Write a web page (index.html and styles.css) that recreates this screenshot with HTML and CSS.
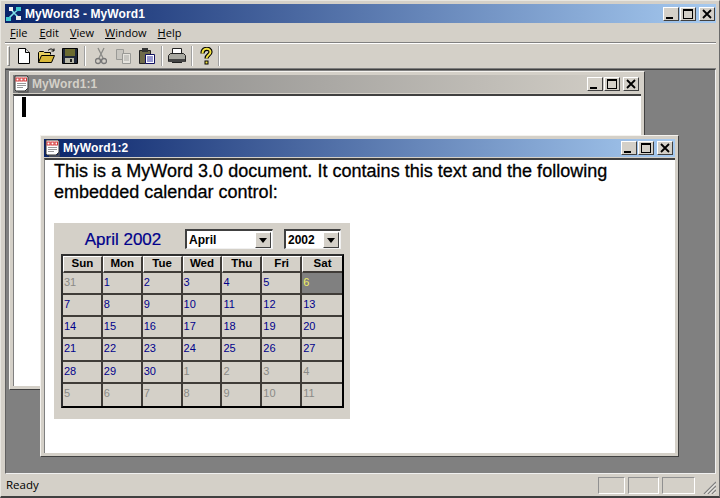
FILE: index.html
```html
<!DOCTYPE html>
<html lang="en">
<head>
<meta charset="utf-8">
<title>MyWord3 - MyWord1</title>
<link rel="stylesheet" href="styles.css">
</head>
<body>
<svg class="defs" width="0" height="0" aria-hidden="true">
  <symbol id="i-min" viewBox="0 0 16 14"><rect x="3" y="10" width="7" height="2" fill="#000"/></symbol>
  <symbol id="i-max" viewBox="0 0 16 14"><path d="M3 2h10v10H3z M4 4v7h8V4z" fill="#000" fill-rule="evenodd"/></symbol>
  <symbol id="i-close" viewBox="0 0 16 14"><path d="M4 3l8 8M12 3l-8 8" stroke="#000" stroke-width="1.8" fill="none"/></symbol>
  <symbol id="i-doc" viewBox="0 0 18 18">
    <path d="M2 1h12l1 1v11l-3 3H3l-1-1z" fill="#fff" stroke="#333" stroke-width="1"/>
    <path d="M15 13v4H5" stroke="#555" stroke-width="1.4" fill="none"/>
    <rect x="3" y="3" width="3" height="3" fill="none" stroke="#d02020" stroke-width=".9"/><rect x="7" y="3" width="3" height="3" fill="none" stroke="#d02020" stroke-width=".9"/><rect x="11" y="3" width="2.500" height="3" fill="none" stroke="#d02020" stroke-width=".9"/>
    <path d="M4 8.500h9M4 10.500h9M4 12.500h6" stroke="#999" stroke-width="1"/>
  </symbol>
  <symbol id="i-dd" viewBox="0 0 16 14"><path d="M4 5h8l-4 5z" fill="#000"/></symbol>
</svg>

<div class="app">
  <header class="titlebar app-title">
    <svg class="app-icon" width="18" height="16" viewBox="0 0 18 16"><rect width="18" height="16" fill="#0a246a"/><path d="M3 13L9 7l5-4M9 7l5 5M9 7L6 3" stroke="#7fe0e8" stroke-width="1.6" fill="none"/><rect x="1" y="11" width="5" height="4" fill="#40c8d0"/><rect x="11" y="10" width="5" height="4" fill="#e8e8e8"/><rect x="11" y="1" width="5" height="4" fill="#40c8d0"/><rect x="4" y="1" width="4" height="4" fill="#f0f0f0"/></svg>
    <span class="title-text">MyWord3 - MyWord1</span>
    <span class="caption-btns">
      <span class="cap"><svg><use href="#i-min"/></svg></span><span class="cap"><svg><use href="#i-max"/></svg></span><span class="cap cap-close"><svg><use href="#i-close"/></svg></span>
    </span>
  </header>

  <nav class="menubar">
    <span class="menu"><u>F</u>ile</span>
    <span class="menu"><u>E</u>dit</span>
    <span class="menu"><u>V</u>iew</span>
    <span class="menu"><u>W</u>indow</span>
    <span class="menu"><u>H</u>elp</span>
  </nav>

  <div class="toolbar">
    <span class="grip"></span>
    <span class="tool"><svg width="14" height="16" viewBox="0 0 14 16"><path d="M1.500 .5h7l4 4v11h-11z" fill="#fff" stroke="#000"/><path d="M8.500 .5v4h4" fill="#ddd" stroke="#000"/></svg></span>
    <span class="tool"><svg width="18" height="16" viewBox="0 0 18 16"><path d="M.5 14.500V4.500l1-1h4l1 1h6v2" fill="#e8d060" stroke="#000"/><path d="M.5 14.500l3-7h13l-3 7z" fill="#d8b838" stroke="#000"/><path d="M10 2.500c2-2 4-2 6 0M16 .5v2.500h-2.500" stroke="#000" fill="none"/></svg></span>
    <span class="tool"><svg width="16" height="16" viewBox="0 0 16 16"><path d="M.5 .5h15v15H.5z" fill="#20283a" stroke="#000"/><rect x="3" y="1" width="10" height="7" fill="#6b6b30"/><rect x="3" y="10" width="9" height="5" fill="#b8b8a8"/><rect x="8" y="11" width="2" height="3" fill="#222"/></svg></span>
    <span class="tsep"></span>
    <span class="tool tool-cut"><svg width="12" height="18" viewBox="0 0 12 18"><path d="M3 1l5 10M9 1L4 11" stroke="#8a8a86" stroke-width="1.300" fill="none"/><circle cx="3" cy="14" r="2.500" fill="none" stroke="#777" stroke-width="1.300"/><circle cx="9" cy="14" r="2.500" fill="none" stroke="#777" stroke-width="1.300"/></svg></span>
    <span class="tool tool-copy"><svg width="17" height="16" viewBox="0 0 17 16"><path d="M1.500 1.500h7v10h-7z" fill="#c8c6c0" stroke="#9a9a96"/><path d="M7.500 5.500h8v10h-8z" fill="#e6e4de" stroke="#9a9a96"/><path d="M9 8h5M9 10h5M9 12h5" stroke="#a8a8a4"/></svg></span>
    <span class="tool tool-paste"><svg width="17" height="18" viewBox="0 0 17 18"><path d="M1.500 3.500h11v13h-11z" fill="#6e6a4a" stroke="#222"/><rect x="4" y="1" width="6" height="4" fill="#333"/><path d="M7.500 7.500h9v9h-9z" fill="#fff" stroke="#101060"/><path d="M9 10h6M9 12h6M9 14h6" stroke="#3030a0"/></svg></span>
    <span class="tsep"></span>
    <span class="tool tool-print"><svg width="18" height="16" viewBox="0 0 18 16"><path d="M4.500 .5h9v6h-9z" fill="#fff" stroke="#222"/><path d="M.5 7.500l2-2h13l2 2v6h-17z" fill="#a8a8a0" stroke="#222"/><rect x="1" y="11" width="16" height="3" fill="#444"/><path d="M4 14.500h10" stroke="#222"/></svg></span>
    <span class="tsep"></span>
    <span class="tool tool-help"><svg width="13" height="18" viewBox="0 0 13 18"><path d="M2.500 6.500c0-6 8-6 8-1.500 0 3-4 3-4 6.500" stroke="#000" stroke-width="4.200" fill="none"/><path d="M2.500 6.500c0-6 8-6 8-1.500 0 3-4 3-4 6.500" stroke="#f0e040" stroke-width="2" fill="none"/><rect x="4.500" y="13.500" width="4" height="4" fill="#000"/><rect x="5.500" y="14.500" width="2" height="2" fill="#f0e040"/></svg></span>
    <span class="tsep"></span>
  </div>

  <main class="mdi">
    <section class="win win-back">
      <header class="titlebar inactive">
        <svg class="doc-icon"><use href="#i-doc"/></svg>
        <span class="title-text">MyWord1:1</span>
        <span class="caption-btns">
          <span class="cap"><svg><use href="#i-min"/></svg></span><span class="cap"><svg><use href="#i-max"/></svg></span><span class="cap cap-close"><svg><use href="#i-close"/></svg></span>
        </span>
      </header>
      <div class="client"><span class="caret"></span></div>
    </section>

    <section class="win win-front">
      <header class="titlebar active">
        <svg class="doc-icon"><use href="#i-doc"/></svg>
        <span class="title-text">MyWord1:2</span>
        <span class="caption-btns">
          <span class="cap"><svg><use href="#i-min"/></svg></span><span class="cap"><svg><use href="#i-max"/></svg></span><span class="cap cap-close"><svg><use href="#i-close"/></svg></span>
        </span>
      </header>
      <div class="client doc">
        <p class="doc-text">This is a MyWord 3.0 document. It contains this text and the following embedded calendar control:</p>
        <div class="calendar">
          <div class="cal-head">
            <span class="cal-title">April 2002</span>
            <span class="combo combo-month"><span class="combo-val">April</span><span class="combo-btn"><svg><use href="#i-dd"/></svg></span></span>
            <span class="combo combo-year"><span class="combo-val">2002</span><span class="combo-btn"><svg><use href="#i-dd"/></svg></span></span>
          </div>
          <div class="cal-grid">
            <div class="dow">Sun</div><div class="dow">Mon</div><div class="dow">Tue</div><div class="dow">Wed</div><div class="dow">Thu</div><div class="dow">Fri</div><div class="dow">Sat</div>
            <div class="day off">31</div><div class="day">1</div><div class="day">2</div><div class="day">3</div><div class="day">4</div><div class="day">5</div><div class="day today">6</div>
            <div class="day">7</div><div class="day">8</div><div class="day">9</div><div class="day">10</div><div class="day">11</div><div class="day">12</div><div class="day">13</div>
            <div class="day">14</div><div class="day">15</div><div class="day">16</div><div class="day">17</div><div class="day">18</div><div class="day">19</div><div class="day">20</div>
            <div class="day">21</div><div class="day">22</div><div class="day">23</div><div class="day">24</div><div class="day">25</div><div class="day">26</div><div class="day">27</div>
            <div class="day">28</div><div class="day">29</div><div class="day">30</div><div class="day off">1</div><div class="day off">2</div><div class="day off">3</div><div class="day off">4</div>
            <div class="day off">5</div><div class="day off">6</div><div class="day off">7</div><div class="day off">8</div><div class="day off">9</div><div class="day off">10</div><div class="day off">11</div>
          </div>
        </div>
      </div>
    </section>
  </main>

  <footer class="statusbar">
    <span class="status-text">Ready</span>
    <span class="pane pane-a"></span><span class="pane pane-b"></span><span class="pane pane-c"></span>
    <svg class="size-grip" width="13" height="13" viewBox="0 0 13 13"><path d="M1 13L13 1M5 13l8-8M9 13l4-4" stroke="#808080" stroke-width="1.300"/><path d="M2.500 13L13 2.500M6.500 13L13 6.500M10.500 13l2.500-2.500" stroke="#fff" stroke-width=".8"/></svg>
  </footer>
</div>
</body>
</html>
```
FILE: styles.css
```css
* { box-sizing: border-box; }
html, body { margin: 0; height: 100%; }
body { width: 720px; height: 498px; overflow: hidden; background: #d4d0c8; font-family: "Liberation Sans", Arial, sans-serif; }
.defs { position: absolute; }
svg { display: block; }

.app {
  width: 720px; height: 498px; padding: 4px 3px 1px 4px;
  display: flex; flex-direction: column;
  background: #d4d0c8;
  border-top: 1px solid #e8e6e0;
  border-left: 1px solid #e8e6e0;
  border-right: 1px solid #6a6a6a;
  border-bottom: 2px solid #404040;
}

.titlebar { display: flex; align-items: center; color: #fff; font-weight: 700; font-size: 12px; }
.app-title { height: 19px; flex: none; padding: 0 1px 0 0; margin-top: -1px; background: linear-gradient(90deg, #0a246a, #a6caf0); }
.app-icon { margin-right: 2px; }
.title-text { white-space: nowrap; letter-spacing: .1px; }
.caption-btns { margin-left: auto; display: flex; gap: 1px; }
.cap {
  width: 16px; height: 14px; background: #d4d0c8;
  border-top: 1px solid #fff; border-left: 1px solid #fff;
  border-right: 1px solid #404040; border-bottom: 1px solid #404040;
  position: relative; display: block;
}
.cap svg { position: absolute; left: -1px; top: -1px; width: 16px; height: 14px; }
.cap-close { margin-left: 2px; }

.menubar {
  height: 20px; flex: none; display: flex; align-items: center; gap: 11px; padding: 0 0 0 5px;
  font-family: "Open Sans", sans-serif; font-size: 11px; color: #000;
  border-bottom: 1px solid #808080;
}
.menu { line-height: 16px; }
.menu:first-child { margin-right: 1px; }

.toolbar {
  height: 26px; flex: none; display: flex; align-items: center; padding-left: 2px;
  border-top: 1px solid #fff; border-bottom: 1px solid #808080;
}
.grip { width: 3px; height: 20px; margin-right: 2px; border-left: 1px solid #fff; border-top: 1px solid #fff; border-right: 1px solid #808080; border-bottom: 1px solid #808080; }
.tool { width: 23px; display: flex; justify-content: center; }
.tsep { width: 2px; height: 20px; margin: 0 3px; border-left: 1px solid #a0a0a0; border-right: 1px solid #fff; }
.tool-print { margin-left: -1px; }
.tool-help { margin-left: -1px; margin-right: -3px; }

.mdi {
  flex: 1; position: relative; background: #808080;
  border-top: 1px solid #404040; border-left: 1px solid #606060;
  border-right: 1px solid #f0f0f0; border-bottom: 1px solid #f0f0f0;
}

.win {
  position: absolute; display: flex; flex-direction: column; padding: 3px;
  background: #d4d0c8;
  border-top: 1px solid #f4f2ee; border-left: 1px solid #f4f2ee;
  border-right: 1px solid #404040; border-bottom: 1px solid #404040;
}
.win-back { left: 3px; top: 1px; width: 636px; height: 319px; }
.win-front { left: 34px; top: 65px; width: 639px; height: 322px; }

.win .titlebar { height: 18px; flex: none; padding: 0 2px 0 0; }
.active { background: linear-gradient(90deg, #0a246a, #a6caf0); }
.inactive { background: linear-gradient(90deg, #808080, #d4d0c8); color: #d4d0c8; }
.doc-icon { width: 18px; height: 18px; margin-right: 1px; }

.client {
  flex: 1; position: relative; background: #fff; margin-top: 1px; min-height: 0;
  border-top: 2px solid #404040; border-left: 1px solid #808080;
}
.caret { position: absolute; left: 8px; top: 1px; width: 4px; height: 20px; background: #000; }

.doc { padding: 1px 0 0 9px; overflow: hidden; }
.doc-text { margin: 0; width: 580px; font-size: 18px; line-height: 21px; color: #000; letter-spacing: .02px; -webkit-text-stroke: .3px #000; }

.calendar { margin-top: 20px; width: 296px; height: 196px; background: #d4d0c8; padding: 6px 7px 0; }
.cal-head { height: 25px; display: flex; align-items: flex-start; }
.cal-title { width: 124px; margin-top: 1px; text-align: center; font-size: 17px; line-height: 19px; color: #00008b; -webkit-text-stroke: .2px #00008b; }
.combo {
  height: 20px; display: flex; align-items: center; justify-content: space-between; background: #fff;
  border-top: 2px solid #404040; border-left: 2px solid #404040;
  border-right: 1px solid #f0f0f0; border-bottom: 1px solid #f0f0f0;
  font-size: 12px; font-weight: 700; color: #000; padding-left: 2px;
}
.combo-month { width: 88px; margin-right: 11px; }
.combo-year { width: 57px; }
.combo-val { font-weight: 700; }
.combo-btn {
  width: 16px; height: 16px; margin-right: 1px; background: #d4d0c8;
  border-top: 1px solid #fff; border-left: 1px solid #fff;
  border-right: 1px solid #404040; border-bottom: 1px solid #404040;
  display: block; position: relative;
}
.combo-btn svg { position: absolute; left: -1px; top: 0; width: 16px; height: 14px; }

.cal-grid {
  width: 283px; height: 154px;
  display: grid; grid-template-columns: repeat(7, 1fr); grid-template-rows: 17px repeat(6, 1fr);
  background: #d4d0c8;
  border-top: 2px solid #303030; border-left: 2px solid #303030;
  border-right: 2px solid #000; border-bottom: 2px solid #000;
}
.dow, .day { border-right: 2px solid #403c38; border-bottom: 2px solid #403c38; min-width: 0; }
.dow:nth-child(7n), .day:nth-child(7n) { border-right: 0; }
.day:nth-last-child(-n+7) { border-bottom: 0; }
.dow {
  text-align: center; font-size: 11.500px; font-weight: 700; line-height: 13px; color: #000;
  border-top: 1px solid #fff; border-left: 1px solid #fff;
}
.day { font-size: 11px; line-height: 13px; padding: 3px 0 0 1px; color: #00008b; }
.off { color: #8a8a86; }
.today { background: #808080; color: #f4f060; }

.statusbar {
  height: 21px; flex: none; display: flex; align-items: center; padding: 1px 0 0 1px;
  font-family: "Open Sans", sans-serif; font-size: 11.500px; color: #000;
}
.status-text { margin-right: auto; line-height: 16px; }
.pane { height: 17px; border-top: 1px solid #909090; border-left: 1px solid #909090; border-right: 1px solid #fff; border-bottom: 1px solid #fff; margin-right: 3px; }
.pane-a { width: 27px; }
.pane-b { width: 31px; }
.pane-c { width: 33px; }
.size-grip { margin: 4px 0 0 5px; }
```
